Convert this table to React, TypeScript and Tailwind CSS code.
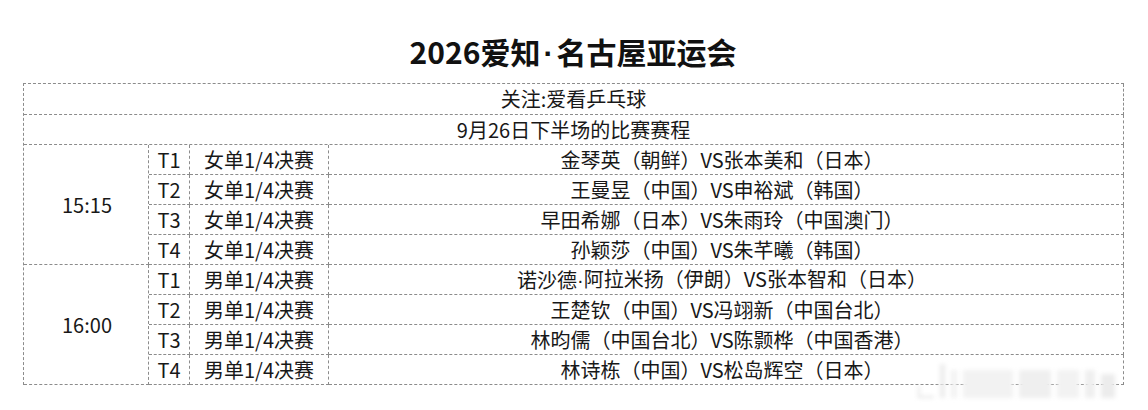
const font = { fontFamily: '"Noto Sans CJK SC", "Noto Sans", sans-serif' };

const sessions = [
  {
    time: '15:15',
    event: '女单1/4决赛',
    matches: [
      '金琴英（朝鲜）VS张本美和（日本）',
      '王曼昱（中国）VS申裕斌（韩国）',
      '早田希娜（日本）VS朱雨玲（中国澳门）',
      '孙颖莎（中国）VS朱芊曦（韩国）',
    ],
  },
  {
    time: '16:00',
    event: '男单1/4决赛',
    matches: [
      '诺沙德·阿拉米扬（伊朗）VS张本智和（日本）',
      '王楚钦（中国）VS冯翊新（中国台北）',
      '林昀儒（中国台北）VS陈颢桦（中国香港）',
      '林诗栋（中国）VS松岛辉空（日本）',
    ],
  },
];

const cell =
  'flex items-center justify-center border-r border-b border-dashed border-[#8c8c8c] text-[20px] leading-none text-[#181818]';

// the middle dot is narrow in the picture, so set it in a latin face
function Dotted({ text, gap = '' }: { text: string; gap?: string }) {
  const parts = text.split('·');
  return (
    <>
      {parts.map((p, i) => (
        <span key={i}>
          {i > 0 && <span className={`font-['Liberation_Sans'] ${gap}`}>·</span>}
          {p}
        </span>
      ))}
    </>
  );
}

export default function App() {
  return (
    <div
      className="relative h-[410px] w-[1148px] overflow-hidden bg-white [text-spacing-trim:space-all]"
      style={font}
    >
      <div className="flex h-[83px] items-end justify-center pb-[14px] pr-[2px]">
        <h1 className="text-[30px] font-bold leading-none text-[#111]">
          <Dotted text="2026爱知·名古屋亚运会" gap="px-[3px]" />
        </h1>
      </div>

      <div className="ml-[23px] grid w-[1101px] grid-cols-[125px_41px_139px_1fr] border-l border-t border-dashed border-[#8c8c8c]">
        <div className={`${cell} col-span-4 h-[31px]`}>关注:爱看乒乓球</div>
        <div className={`${cell} col-span-4 h-[30px]`}>9月26日下半场的比赛赛程</div>

        {sessions.map((s) => (
          <div key={s.time} className="contents">
            <div className={`${cell} row-span-4 pl-[2px]`}>{s.time}</div>
            {s.matches.map((m, i) => (
              <div key={m} className="contents">
                <div className={`${cell} h-[30px]`}>T{i + 1}</div>
                <div className={`${cell} h-[30px]`}>{s.event}</div>
                <div className={`${cell} h-[30px] pr-[8px] text-[19.5px]`}>
                  <Dotted text={m} />
                </div>
              </div>
            ))}
          </div>
        ))}
      </div>

      <div className="absolute left-[918px] top-[362px] flex h-[36px] items-end gap-[6px] blur-[2px]">
        <div className="h-[12px] w-[16px] border-b-2 border-l-2 border-[#e4e4e4]" />
        <div className="h-[34px] w-[5px] bg-[#ececec]" />
        <div className="h-[28px] w-[6px] bg-[#f2f2f2]" />
        <div className="h-[28px] w-[50px] bg-[#f2f2f2]" />
        <div className="h-[28px] w-[32px] bg-[#efefef]" />
        <div className="h-[28px] w-[22px] bg-[#f2f2f2]" />
        <div className="h-[28px] w-[10px] bg-[#efefef]" />
        <div className="h-[24px] w-[14px] bg-[#ececec]" />
      </div>
    </div>
  );
}
